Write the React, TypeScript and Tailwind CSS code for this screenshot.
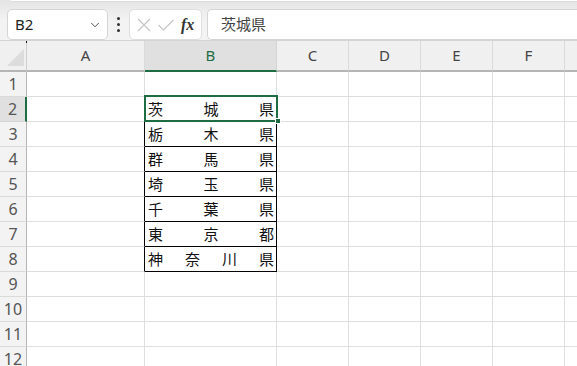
import { ChevronDown } from 'lucide-react';

const cols = ['A', 'B', 'C', 'D', 'E', 'F', ''];
const widths = ['w-[118px]', 'w-[132px]', 'w-[72px]', 'w-[72px]', 'w-[72px]', 'w-[72px]', 'w-[72px]'];

const data: Record<number, string[]> = {
  2: ['茨', '城', '県'],
  3: ['栃', '木', '県'],
  4: ['群', '馬', '県'],
  5: ['埼', '玉', '県'],
  6: ['千', '葉', '県'],
  7: ['東', '京', '都'],
  8: ['神', '奈', '川', '県'],
};

const rows = Array.from({ length: 12 }, (_, i) => i + 1);

function FormulaBar() {
  return (
    <div className="h-[40px] bg-gradient-to-b from-[#e4e4e4] via-[#f3f3f3] to-[#f3f3f3] to-[25%] relative">
      <div className="absolute left-[10px] right-0 top-0 h-[2px] bg-white border-b border-[#dcdcdc] rounded-bl-[3px]" />
      <div className="flex items-stretch pt-[9px] h-[40px]">
        <div className="ml-[7px] w-[101px] bg-white border border-[#d4d4d4] rounded-[5px] flex items-center justify-between pl-[7px] pr-[5px]">
          <span className="text-[15px] text-[#222] leading-none">B2</span>
          <ChevronDown className="w-[14px] h-[14px] text-[#444]" strokeWidth={1.6} />
        </div>
        <div className="w-[21px] flex flex-col items-center justify-center gap-[3px]">
          <span className="w-[3px] h-[3px] bg-[#333] rounded-full" />
          <span className="w-[3px] h-[3px] bg-[#333] rounded-full" />
          <span className="w-[3px] h-[3px] bg-[#333] rounded-full" />
        </div>
        <div className="w-[73px] bg-white border border-[#dedede] rounded-[5px] flex items-center pl-[6px]">
          <svg width="16" height="16" viewBox="0 0 16 16" className="mr-[5px]">
            <path d="M2 2 L14 14 M14 2 L2 14" stroke="#c4c4c4" strokeWidth="1.1" fill="none" />
          </svg>
          <svg width="18" height="16" viewBox="0 0 18 16">
            <path d="M1.5 8 L6.5 13 L16.5 3" stroke="#c4c4c4" strokeWidth="1.1" fill="none" />
          </svg>
          <span className="ml-[6px] text-[16px] italic font-bold text-[#333] leading-none" style={{ fontFamily: '"Liberation Serif", serif' }}>
            fx
          </span>
        </div>
        <div className="ml-[5px] flex-1 bg-white border border-[#d4d4d4] rounded-l-[5px] border-r-0 flex items-center pl-[13px]">
          <span className="text-[15px] text-[#444] leading-none">茨城県</span>
        </div>
      </div>
    </div>
  );
}

function Cell({ col, row }: { col: number; row: number }) {
  const inTable = col === 1 && row >= 2 && row <= 8;
  const borderB = col === 1 && row >= 1 && row <= 8 ? 'border-b-black' : 'border-b-[#dedede]';
  const borderR = (col === 0 || col === 1) && row >= 2 && row <= 8 ? 'border-r-black' : 'border-r-[#dedede]';
  const chars = inTable ? data[row] : null;
  return (
    <div className={`${widths[col]} shrink-0 h-[25px] border-b border-r ${borderB} ${borderR} flex items-center`}>
      {chars && (
        <div className="flex-1 flex justify-between pl-[3px] pr-[2px] text-[15px] text-[#111] leading-none pt-[1px]">
          {chars.map((c, i) => (
            <span key={i}>{c}</span>
          ))}
        </div>
      )}
    </div>
  );
}

export default function App() {
  return (
    <div
      className="w-[577px] h-[366px] overflow-hidden bg-white"
      style={{ fontFamily: '"Noto Sans", "Noto Sans CJK JP", sans-serif' }}
    >
      <FormulaBar />
      <div className="relative">
        {/* column headers */}
        <div className="flex h-[32px] bg-[#f0f0f0] border-t border-[#d4d4d4]">
          <div className="w-[27px] shrink-0 border-r border-b-2 border-r-[#cfcfcf] border-b-[#b5b5b5] relative">
            <div className="absolute left-[7px] bottom-[4px] w-0 h-0 border-l-[17px] border-l-transparent border-b-[17px] border-b-[#dcdcdc]" />
            <div className="absolute right-[-1px] top-[0px] w-[1px] h-[2px] bg-[#111]" />
          </div>
          {cols.map((c, i) =>
            c === 'B' ? (
              <div
                key={i}
                className={`${widths[i]} shrink-0 bg-[#e0e0e0] border-r border-r-[#d4d4d4] border-b-2 border-b-[#1e6c41] flex items-center justify-center text-[15px] text-[#1e6c41]`}
              >
                {c}
              </div>
            ) : (
              <div
                key={i}
                className={`${widths[i]} shrink-0 border-r border-r-[#dadada] border-b-2 border-b-[#b5b5b5] flex items-center justify-center text-[15px] text-[#444]`}
              >
                {c}
              </div>
            )
          )}
        </div>
        {/* rows */}
        {rows.map((r) => (
          <div key={r} className="flex">
            <div
              className={`w-[27px] shrink-0 h-[25px] border-b flex items-center justify-center text-[16px] ${
                r === 2
                  ? 'bg-[#e0e0e0] border-b-[#d4d4d4] border-r-2 border-r-[#1e6c41] text-[#555]'
                  : 'bg-[#f3f3f3] border-b-[#dadada] border-r border-r-[#b5b5b5] text-[#555]'
              }`}
            >
              {r}
            </div>
            {cols.map((_, i) => (
              <Cell key={i} col={i} row={r} />
            ))}
          </div>
        ))}
        {/* active cell selection */}
        <div className="absolute left-[144px] top-[55px] w-[134px] h-[27px] border-2 border-[#1e6c41] pointer-events-none" />
        <div className="absolute left-[275px] top-[78px] w-[6px] h-[6px] bg-[#1e6c41] border border-white pointer-events-none" />
      </div>
    </div>
  );
}
